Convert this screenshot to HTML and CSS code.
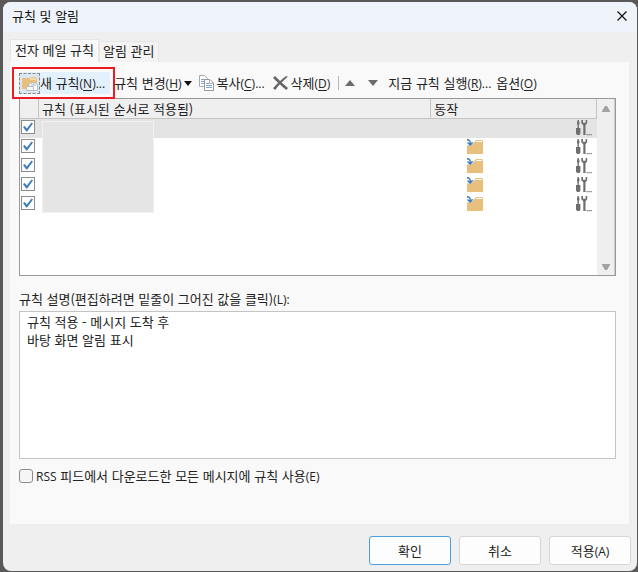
FILE: index.html
```html
<!DOCTYPE html>
<html lang="ko">
<head>
    <meta charset="UTF-8">
    <meta name="viewport" content="width=device-width, initial-scale=1.0">
    <title>규칙 및 알림</title>
    <link rel="stylesheet" href="styles.css">
</head>
<body>

<!-- Iconos compartidos por las filas de la tabla -->
<svg class="sprite" aria-hidden="true">
    <symbol id="icon-move" viewBox="0 0 16 15">
        <path d="M0 15V6l4 1 5-6h6l1 1v13z" fill="#e9bf7d"/>
        <path d="M9 2.500h6" stroke="#fff" stroke-width="1"/>
        <path d="M0 .7c2.500 0 3.500 1.500 3.300 5M.5 3.500l2.800 2.700 2.300-3" fill="none" stroke="#3f7fbe" stroke-width="1.500"/>
    </symbol>
    <symbol id="icon-tools" viewBox="0 0 16 16">
        <path d="M2.200 0v8" stroke="#777" stroke-width="1.500"/>
        <path d="M1 1.500h2.400v3H1zM0 8h4.400v5.500l-1 1.500H1l-1-1.500z" fill="#6e6e6e"/>
        <path d="M5.300 0v3.200l2 2V15h2.200V5.200l1.700-2V0H9.600v2.700H7V0z" fill="#6e6e6e"/>
        <path d="M10.500 14h1.300v1.300h-1.300zM12.500 14h1.300v1.300h-1.300zM14.500 14h1.300v1.300h-1.300z" fill="#777"/>
    </symbol>
</svg>

<div class="dialog">
    <header class="titlebar">
        <h1>규칙 및 알림</h1>
        <button class="close" aria-label="닫기">
            <svg width="10" height="10" viewBox="0 0 10 10"><path d="M.5.5l9 9M9.500.5l-9 9" stroke="#111" stroke-width="1.200"/></svg>
        </button>
    </header>

    <div class="tabs" role="tablist">
        <button class="tab active" role="tab" aria-selected="true">전자 메일 규칙</button>
        <button class="tab" role="tab" aria-selected="false">알림 관리</button>
    </div>

    <main class="panel">
        <div class="toolbar">
            <div class="marked">
                <button class="tool new-rule">
                    <span class="new-icon">
                        <svg width="17" height="17" viewBox="0 0 17 17">
                            <path d="M1 14V3h8l1-1h5l1 2v10z" fill="#e9bf7d"/>
                            <path d="M9 4h6" stroke="#fff6e5"/>
                            <path d="M8 9.500l1.500-1.500h5l2 1.500v6h-8.500z" fill="#fff" stroke="#bbb"/>
                            <path d="M5.500 11.500h7v4h-7z" fill="#f4f7fa" stroke="#bbb"/>
                            <path d="M10 10h5" stroke="#8db4dc"/>
                        </svg>
                    </span>
                    <span>새 규칙<span class="latin">(<u>N</u>)...</span></span>
                </button>
            </div>
            <button class="tool change">
                <span>규칙 변경<span class="latin">(<u>H</u>)</span></span>
                <svg width="8" height="5" viewBox="0 0 8 5"><path d="M0 0h8L4 5z" fill="#111"/></svg>
            </button>
            <button class="tool copy">
                <svg width="15" height="16" viewBox="0 0 15 16">
                    <path d="M.5.5h5l3 3v8h-8z" fill="#fff" stroke="#aaa"/>
                    <path d="M2 4.500h4M2 6.500h4M2 8.500h4" stroke="#7da9d6"/>
                    <path d="M5.500 4.500h5.500l3.500 3.500v7.500h-9z" fill="#fff" stroke="#999"/>
                    <path d="M10.500 4.500v4h4" fill="none" stroke="#aaa"/>
                    <path d="M7 8.500h3M7 10.500h6M7 12.500h6" stroke="#7da9d6"/>
                </svg>
                <span>복사<span class="latin">(<u>C</u>)...</span></span>
            </button>
            <button class="tool delete">
                <svg width="15" height="14" viewBox="0 0 15 14"><path d="M0 1.800L2 0C5 3 10 8 15 12l-1.700 2C9 10.500 4 6 0 1.800z" fill="#666"/><path d="M14.800.8L13.200 0C9 3 4 7.500 0 12.300L2.300 14C5.500 9.500 9.800 5 14.800.8z" fill="#666"/></svg>
                <span>삭제<span class="latin">(<u>D</u>)</span></span>
            </button>
            <span class="separator"></span>
            <div class="order">
                <button class="tool" aria-label="위로 이동">
                    <svg width="10" height="6" viewBox="0 0 10 6"><path d="M0 6h10L5 0z" fill="#6b6b6b"/></svg>
                </button>
                <button class="tool" aria-label="아래로 이동">
                    <svg width="10" height="6" viewBox="0 0 10 6"><path d="M0 0h10L5 6z" fill="#6b6b6b"/></svg>
                </button>
            </div>
            <button class="tool run"><span>지금 규칙 실행<span class="latin">(<u>R</u>)...</span></span></button>
            <button class="tool"><span>옵션<span class="latin">(<u>O</u>)</span></span></button>
        </div>

        <div class="rule-list">
            <div class="rule-view">
                <table class="rules">
                    <thead>
                        <tr>
                            <th class="col-check"></th>
                            <th class="col-name">규칙 (표시된 순서로 적용됨)</th>
                            <th class="col-action" colspan="2">동작</th>
                        </tr>
                    </thead>
                    <tbody>
                        <tr class="selected">
                            <td><input type="checkbox" class="check" aria-label="규칙 1" checked></td>
                            <td></td>
                            <td class="move"></td>
                            <td class="edit"><svg width="16" height="16"><use href="#icon-tools"/></svg></td>
                        </tr>
                        <tr>
                            <td><input type="checkbox" class="check" aria-label="규칙 2" checked></td>
                            <td></td>
                            <td class="move"><svg width="16" height="15"><use href="#icon-move"/></svg></td>
                            <td class="edit"><svg width="16" height="16"><use href="#icon-tools"/></svg></td>
                        </tr>
                        <tr>
                            <td><input type="checkbox" class="check" aria-label="규칙 3" checked></td>
                            <td></td>
                            <td class="move"><svg width="16" height="15"><use href="#icon-move"/></svg></td>
                            <td class="edit"><svg width="16" height="16"><use href="#icon-tools"/></svg></td>
                        </tr>
                        <tr>
                            <td><input type="checkbox" class="check" aria-label="규칙 4" checked></td>
                            <td></td>
                            <td class="move"><svg width="16" height="15"><use href="#icon-move"/></svg></td>
                            <td class="edit"><svg width="16" height="16"><use href="#icon-tools"/></svg></td>
                        </tr>
                        <tr>
                            <td><input type="checkbox" class="check" aria-label="규칙 5" checked></td>
                            <td></td>
                            <td class="move"><svg width="16" height="15"><use href="#icon-move"/></svg></td>
                            <td class="edit"><svg width="16" height="16"><use href="#icon-tools"/></svg></td>
                        </tr>
                    </tbody>
                </table>
                <div class="mask"></div>
            </div>
            <div class="scrollbar">
                <svg width="8" height="6" viewBox="0 0 8 6"><path d="M0 6V5l3-5h2l3 5v1z" fill="#a3a3a3"/></svg>
                <svg width="8" height="6" viewBox="0 0 8 6"><path d="M0 0v1l3 5h2l3-5V0z" fill="#a3a3a3"/></svg>
            </div>
        </div>

        <label class="desc-label" for="desc">규칙 설명(편집하려면 밑줄이 그어진 값을 클릭)<span class="latin">(L):</span></label>
        <textarea class="desc" id="desc" readonly>규칙 적용 - 메시지 도착 후
바탕 화면 알림 표시</textarea>

        <label class="rss"><input type="checkbox" class="rss-check"><span><span class="latin">RSS</span> 피드에서 다운로드한 모든 메시지에 규칙 사용<span class="latin">(E)</span></span></label>
    </main>

    <footer class="actions">
        <button class="btn primary">확인</button>
        <button class="btn">취소</button>
        <button class="btn">적용<span class="latin">(A)</span></button>
    </footer>
</div>

</body>
</html>
```

FILE: styles.css
```css
* {
    box-sizing: border-box;
}

body {
    margin: 0;
    min-height: 100vh;
    padding: 2px 1px 1px 3px;
    display: flex;
    background-color: #595959;
    font-family: "Noto Sans CJK KR", "Noto Sans", sans-serif;
    font-size: 13px;
    line-height: 18px;
    color: #222;
}

button,
textarea {
    font: inherit;
    color: inherit;
}

button {
    padding: 0;
    border: none;
    background: none;
    white-space: nowrap;
}

svg {
    display: block;
    flex: none;
}

u {
    text-underline-offset: 2px;
}

.latin {
    font-family: "Open Sans", sans-serif;
    font-size: 12px;
    line-height: 1;
}

.sprite {
    position: absolute;
    width: 0;
    height: 0;
}

.dialog {
    flex: 1;
    min-width: 0;
    display: flex;
    flex-direction: column;
    background-color: #efefef;
    border-radius: 8px;
    overflow: hidden;
}

.titlebar {
    display: flex;
    justify-content: space-between;
    align-items: center;
    height: 30px;
    padding: 0 10px 2px 9px;
    background-color: #eef4f9;
}

.titlebar h1 {
    margin: 0;
    font-size: 13px;
    font-weight: normal;
    color: #111;
}

.close {
    padding: 4px;
    margin-right: -4px;
}

/* Pestañas */
.tabs {
    display: flex;
    align-items: flex-end;
    padding: 7px 7px 0;
}

.tab {
    height: 21px;
    padding: 0 3px 2px;
    border: 1px solid #e6e6e6;
    border-bottom: none;
    background-color: #f3f3f3;
}

.tab.active {
    height: 23px;
    padding: 0 4px 2px;
    background-color: #f9f9f9;
}

.panel {
    flex: 1;
    display: flex;
    flex-direction: column;
    margin: 0 8px 0 7px;
    padding: 6px 13px 0 9px;
    background-color: #f9f9f9;
}

/* Barra de herramientas */
.toolbar {
    display: flex;
    align-items: center;
    height: 30px;
}

.tool {
    display: flex;
    align-items: center;
    gap: 3px;
}

.marked {
    position: relative;
    margin-right: 4px;
}

.marked::after {
    content: "";
    position: absolute;
    inset: -5px -5px -5px -7px;
    border: 2px solid #ec1c24;
    z-index: 1;
    pointer-events: none;
}

.new-rule {
    height: 22px;
    padding-right: 5px;
    gap: 0;
    background-color: #e3f1fc;
}

.new-icon {
    padding: 1px;
    border: 1px dashed #888;
    background-color: #dbe8f3;
}

.change {
    gap: 2px;
    margin-right: 7px;
}

.copy {
    margin-right: 8px;
}

.delete {
    margin-right: 8px;
}

.separator {
    width: 1px;
    height: 14px;
    margin-right: 6px;
    background-color: #b5b5b5;
}

.order {
    display: flex;
    gap: 13px;
    margin-right: 10px;
}

.run {
    margin-right: 5px;
}

/* Lista de reglas */
.rule-list {
    display: flex;
    height: 178px;
    border: 1px solid #999;
    background-color: #fff;
}

.rule-view {
    position: relative;
    flex: 1;
}

.rules {
    width: 100%;
    table-layout: fixed;
    border-collapse: separate;
    border-spacing: 0;
}

.rules th {
    height: 20px;
    padding: 0 3px;
    border-right: 1px solid #c4c4c4;
    border-bottom: 1px solid #c4c4c4;
    background-color: #efefef;
    font-weight: normal;
    text-align: left;
}

.rules td {
    height: 19px;
    padding: 1px 1px 0;
    vertical-align: top;
}

.col-check {
    width: 19px;
}

.col-name {
    width: 68%;
}

.rules .selected td {
    background-color: #e4e4e4;
}

.rules .move {
    padding-left: 36px;
}

.rules .edit {
    padding-left: 62px;
}

.check {
    display: block;
    width: 14px;
    height: 14px;
    margin: 0;
    appearance: none;
    border: 1px solid #8c8c8c;
    background-color: #fff;
}

.check:checked::before {
    content: "";
    display: block;
    width: 10px;
    height: 10px;
    margin: 1px;
    background-color: #3f7fbe;
    clip-path: polygon(0 50%, 18% 40%, 38% 65%, 85% 5%, 100% 15%, 42% 95%, 32% 95%);
}

/* Nombres de reglas ocultos */
.mask {
    position: absolute;
    top: 22px;
    left: 22px;
    width: 112px;
    height: 92px;
    border: 1px solid #f0f0f0;
    background-color: #e5e5e5;
}

.scrollbar {
    display: flex;
    flex-direction: column;
    justify-content: space-between;
    align-items: center;
    width: 18px;
    padding: 7px 0 5px;
    border-right: 1px solid #ccc;
    background-color: #efefef;
}

.desc-label {
    margin-top: 14px;
}

.desc {
    display: block;
    width: 100%;
    height: 148px;
    margin-top: 3px;
    padding: 1px 7px;
    border: 1px solid #c4c4c4;
    border-radius: 0;
    outline: none;
    resize: none;
    background-color: #fff;
}

.rss {
    display: flex;
    align-items: center;
    gap: 3px;
    margin-top: 8px;
}

.rss-check {
    width: 14px;
    height: 14px;
    margin: 0;
    appearance: none;
    border: 1px solid #8c8c8c;
    border-radius: 3px;
    background-color: #f5f5f5;
}

/* Botones inferiores */
.actions {
    display: flex;
    justify-content: flex-end;
    gap: 8px;
    padding: 12px 6px 6px;
}

.btn {
    width: 82px;
    height: 29px;
    border: 1px solid #d6d6d6;
    border-radius: 3px;
    background-color: #fdfdfd;
}

.btn.primary {
    border-color: #4a9fdf;
}
```
